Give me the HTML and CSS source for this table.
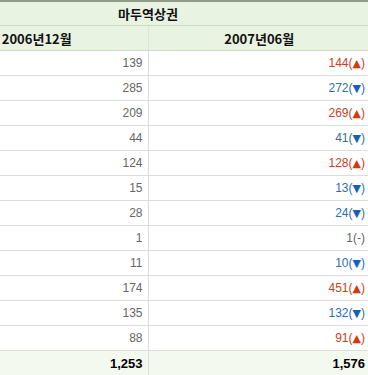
FILE: index.html
```html
<!DOCTYPE html>
<html lang="ko">
<head>
<meta charset="utf-8">
<link rel="stylesheet" href="styles.css">
</head>
<body>
<div class="frame">
<table class="stats">
  <thead>
    <tr class="title-row"><th colspan="2">마두역상권</th></tr>
    <tr class="head-row"><th class="c1">2006년12월</th><th class="c2">2007년06월</th></tr>
  </thead>
  <tbody>
    <tr><td class="c1">139</td><td class="c2 up">144(<span class="tri">▲</span>)</td></tr>
    <tr><td class="c1">285</td><td class="c2 down">272(<span class="tri">▼</span>)</td></tr>
    <tr><td class="c1">209</td><td class="c2 up">269(<span class="tri">▲</span>)</td></tr>
    <tr><td class="c1">44</td><td class="c2 down">41(<span class="tri">▼</span>)</td></tr>
    <tr><td class="c1">124</td><td class="c2 up">128(<span class="tri">▲</span>)</td></tr>
    <tr><td class="c1">15</td><td class="c2 down">13(<span class="tri">▼</span>)</td></tr>
    <tr><td class="c1">28</td><td class="c2 down">24(<span class="tri">▼</span>)</td></tr>
    <tr><td class="c1">1</td><td class="c2 same">1(-)</td></tr>
    <tr><td class="c1">11</td><td class="c2 down">10(<span class="tri">▼</span>)</td></tr>
    <tr><td class="c1">174</td><td class="c2 up">451(<span class="tri">▲</span>)</td></tr>
    <tr><td class="c1">135</td><td class="c2 down">132(<span class="tri">▼</span>)</td></tr>
    <tr><td class="c1">88</td><td class="c2 up">91(<span class="tri">▲</span>)</td></tr>
  </tbody>
  <tfoot>
    <tr class="total-row"><td class="c1">1,253</td><td class="c2">1,576</td></tr>
  </tfoot>
</table>
</div>
</body>
</html>
```

FILE: styles.css
```css
html, body {
  margin: 0;
  padding: 0;
  background: #ffffff;
}
.frame {
  width: 368px;
  height: 375px;
  overflow: hidden;
}
.stats {
  margin-left: -74px;
  width: 444px;
  border-collapse: collapse;
  table-layout: fixed;
  border-top: 2px solid #8f9a88;
  font-family: "Liberation Sans", "Noto Sans CJK KR", sans-serif;
  font-size: 12px;
}
.stats th {
  font-family: "Noto Sans CJK KR", sans-serif;
  font-weight: bold;
  font-size: 13px;
  color: #111;
  background: #e9f3e1;
  padding: 0;
  text-align: center;
}
.title-row th {
  height: 23px;
  border-bottom: 1px solid #cfd8c8;
}
.head-row th {
  height: 24px;
  border-bottom: 1px solid #cfd8c8;
}
.c1 {
  width: 224px;
}
.c2 {
  width: 220px;
}
.head-row .c1 {
  border-right: 1px solid #dde4d8;
}
.stats td {
  height: 24px;
  padding: 0 5px 0 0;
  text-align: right;
  color: #666;
  border-bottom: 1px solid #dcdcdc;
}
.stats td.c1 {
  border-right: 1px solid #dcdcdc;
}
.up {
  color: #c0451f !important;
}
.down {
  color: #2a6fb0 !important;
}
.same {
  color: #666;
}
.tri {
  font-family: "DejaVu Sans", sans-serif;
  font-size: 11px;
}
.up .tri {
  color: #d23a10;
}
.down .tri {
  color: #1661b8;
}
.total-row td {
  background: #f3f9ee;
  color: #000;
  font-weight: bold;
  font-size: 13px;
  height: 25px;
  border-bottom: none;
}
```
